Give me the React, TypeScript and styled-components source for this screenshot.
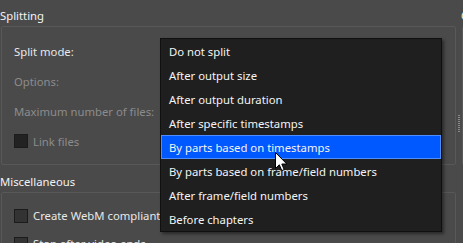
import React from "react"
import styled, { createGlobalStyle } from "styled-components"

const GlobalStyle = createGlobalStyle`
  html, body {
    margin: 0;
    padding: 0;
    background: #4a4a4a;
    overflow: hidden;
  }
  body {
    font-family: "Noto Sans", "Liberation Sans", sans-serif;
    font-size: 11.3px;
    color: #e6e6e6;
  }
`

const splitModes = [
  "Do not split",
  "After output size",
  "After output duration",
  "After specific timestamps",
  "By parts based on timestamps",
  "By parts based on frame/field numbers",
  "After frame/field numbers",
  "Before chapters",
]

const App = () => {
  return (
    <Page>
      <GlobalStyle />
      <LeftColumn>
        <SectionTitle>Splitting</SectionTitle>
        <GroupBox height={139}>
          <FormRow>
            <Label>Split mode:</Label>
          </FormRow>
          <FormRow>
            <Label disabled>Options:</Label>
          </FormRow>
          <FormRow>
            <Label disabled>Maximum number of files:</Label>
          </FormRow>
          <FormRow>
            <CheckRow>
              <CheckBox disabled />
              <Label disabled>Link files</Label>
            </CheckRow>
          </FormRow>
        </GroupBox>
        <SectionTitle>Miscellaneous</SectionTitle>
        <GroupBox height={80}>
          <CheckRow top={6}>
            <CheckBox />
            <Label>Create WebM compliant file</Label>
          </CheckRow>
          <CheckRow top={13}>
            <CheckBox />
            <Label>Stop after video ends</Label>
          </CheckRow>
        </GroupBox>
      </LeftColumn>
      <Splitter>
        <Grip />
      </Splitter>
      <RightColumn>
        <SectionTitle>Chapters</SectionTitle>
        <GroupBox height={139} />
      </RightColumn>

      <Popup>
        {splitModes.map((mode, i) => (
          <PopupItem key={"split_mode_" + i} selected={i === 4}>
            {mode}
          </PopupItem>
        ))}
      </Popup>
      <Cursor width="13" height="20" viewBox="0 0 13 20">
        <path
          d="M0.5 0.5 L0.5 16.5 L4.3 12.8 L6.8 18.6 L9.2 17.6 L6.8 12 L11.8 12 Z"
          fill="#ffffff"
          stroke="#000000"
          strokeWidth="1"
          strokeLinejoin="miter"
        />
      </Cursor>
    </Page>
  )
}

const Page = styled.div`
  position: relative;
  display: flex;
  align-items: flex-start;
  width: 463px;
  height: 243px;
  overflow: hidden;
`

const LeftColumn = styled.div`
  display: flex;
  flex-direction: column;
  width: 456px;
  flex-shrink: 0;
`

const RightColumn = styled.div`
  display: flex;
  flex-direction: column;
  width: 200px;
  flex-shrink: 0;
`

const Splitter = styled.div`
  width: 5px;
  flex-shrink: 0;
  display: flex;
  justify-content: center;
  padding-top: 115px;
`

const Grip = styled.div`
  width: 2px;
  height: 18px;
  margin-left: 1px;
  background: repeating-linear-gradient(
    to bottom,
    #8a8a8a 0px,
    #8a8a8a 1px,
    transparent 1px,
    transparent 2px
  );
`

const SectionTitle = styled.div`
  height: 26px;
  flex-shrink: 0;
  box-sizing: border-box;
  padding-top: 8px;
  line-height: 15px;
  color: #f2f2f2;
  white-space: nowrap;
`

const GroupBox = styled.div`
  height: ${(props: { height: number }) => props.height}px;
  flex-shrink: 0;
  box-sizing: border-box;
  margin-left: 1px;
  margin-bottom: 1px;
  border: 1px solid #585858;
  border-radius: 2px;
  padding: 9px 12px 0 12px;
  display: flex;
  flex-direction: column;
`

const FormRow = styled.div`
  height: 30px;
  display: flex;
  align-items: center;
`

const CheckRow = styled.div`
  display: flex;
  align-items: center;
  gap: 5px;
  margin-top: ${(props: { top?: number }) => props.top ?? 0}px;
`

const Label = styled.span`
  color: ${(props: { disabled?: boolean }) => (props.disabled ? "#8c8c8c" : "#e8e8e8")};
  white-space: nowrap;
`

const CheckBox = styled.div`
  width: 14px;
  height: 14px;
  box-sizing: border-box;
  border: 1px solid #1b1b1b;
  background: ${(props: { disabled?: boolean }) => (props.disabled ? "#222222" : "#333333")};
  flex-shrink: 0;
`

const Popup = styled.div`
  position: absolute;
  left: 160px;
  top: 38px;
  width: 282px;
  box-sizing: border-box;
  background: #1f1f1f;
  border: 1px solid #101010;
  box-shadow: 2px 2px 3px rgba(0, 0, 0, 0.45);
`

const PopupItem = styled.div`
  height: 24px;
  box-sizing: border-box;
  display: flex;
  align-items: center;
  padding-left: 7px;
  color: #f4f4f4;
  white-space: nowrap;
  background: ${(props: { selected?: boolean }) => (props.selected ? "#0058ff" : "transparent")};
  border: 1px solid ${(props: { selected?: boolean }) => (props.selected ? "#4d8dff" : "transparent")};
`

const Cursor = styled.svg`
  position: absolute;
  left: 275px;
  top: 152px;
`

export default App
